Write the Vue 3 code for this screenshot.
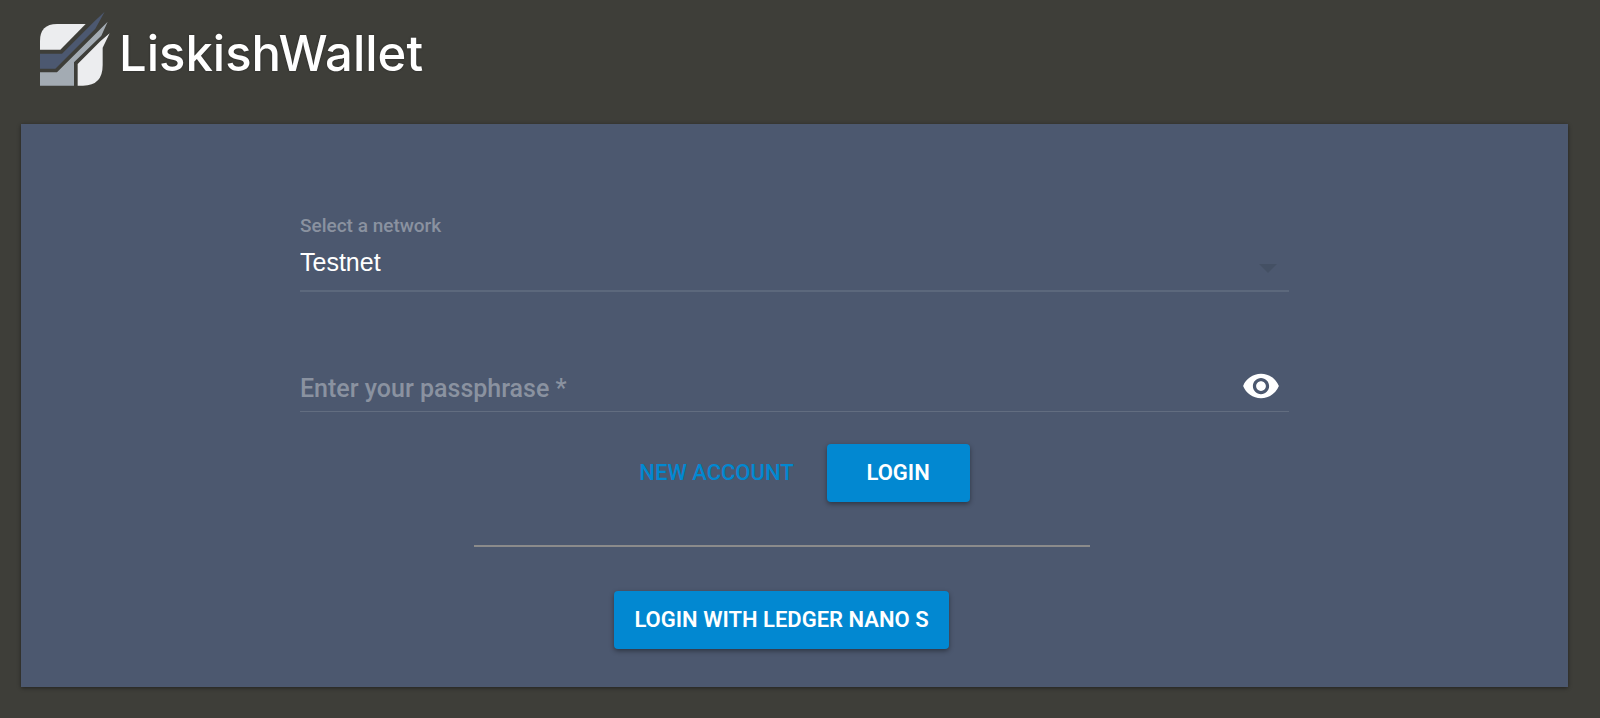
<script setup>
import { ref } from 'vue'

const network = ref('testnet')
const passphrase = ref('')
const visible = ref(false)
</script>

<template>
  <div class="page">
    <header class="brand">
      <svg class="logo" viewBox="57 27 216 234" aria-hidden="true">
        <path fill="#ecedef" d="M60 149V123Q60 72 111 72H197L121 149Z" />
        <path fill="#4c5870" d="M60 161H126L222 65L254 35L226 86L106 206H60Z" />
        <path fill="#a3abb3" d="M60 217H111L233 95L263 65L244 107L162 187V257H60Z" />
        <path fill="#ecedef" d="M173 257V192L241 124L269 100L248 143V195Q248 257 189 257Z" />
      </svg>
      <h1 class="name">LiskishWallet</h1>
    </header>

    <main class="card">
      <form class="form" @submit.prevent>
        <div class="field network">
          <label class="label" for="network">Select a network</label>
          <select id="network" v-model="network" class="select">
            <option value="testnet">Testnet</option>
            <option value="mainnet">Mainnet</option>
          </select>
          <svg class="arrow" viewBox="0 0 18 9" aria-hidden="true"><path d="M0 0H18L9 9Z" /></svg>
        </div>

        <div class="field phrase">
          <input
            v-model="passphrase"
            class="input"
            :type="visible ? 'text' : 'password'"
            placeholder="Enter your passphrase *"
            aria-label="Enter your passphrase"
            required
          />
          <button type="button" class="eye" aria-label="Show passphrase" @click="visible = !visible">
            <svg viewBox="1 4 22 16" aria-hidden="true">
              <path d="M12 4.5C7 4.5 2.73 7.61 1 12c1.73 4.39 6 7.5 11 7.5s9.27-3.11 11-7.5c-1.73-4.39-6-7.5-11-7.5zM12 17c-2.76 0-5-2.24-5-5s2.24-5 5-5 5 2.24 5 5-2.24 5-5 5zm0-8c-1.66 0-3 1.34-3 3s1.34 3 3 3 3-1.34 3-3-1.34-3-3-3z" />
            </svg>
          </button>
        </div>

        <div class="actions">
          <button type="button" class="btn flat">NEW ACCOUNT</button>
          <button type="submit" class="btn raised">LOGIN</button>
        </div>
      </form>

      <section class="ledger">
        <hr class="rule" />
        <button type="button" class="btn raised">LOGIN WITH LEDGER NANO S</button>
      </section>
    </main>
  </div>
</template>

<style>
body {
  margin: 0;
  background: #3e3e39;
}
</style>

<style scoped>
.page {
  box-sizing: border-box;
  min-height: 100vh;
  padding: 9px 32px 31px 21px;
  font-family: Roboto, "Liberation Sans", sans-serif;
  color: #fff;
}
.brand {
  display: flex;
  align-items: center;
  gap: 8px;
  height: 90px;
  padding: 0 18px;
  margin-bottom: 25px;
}
.logo {
  width: 72px;
  height: 78px;
  margin-bottom: 12px;
}
.name {
  margin: 0;
  font: 500 49px/56px Inter, sans-serif;
  text-shadow: 0 0 2px #222;
}
.card {
  padding: 80px 0 38px;
  background: #4c586f;
  box-shadow: 0 1px 4px rgba(0, 0, 0, 0.45);
}
.form {
  padding: 0 279px;
}
.field {
  position: relative;
  display: flex;
  border-bottom: 1px solid #626d80;
}
.network {
  flex-direction: column;
  height: 86px;
  border-bottom: 2px solid #5c687c;
}
.label {
  padding-top: 10px;
  font-size: 19px;
  font-weight: 500;
  line-height: 24px;
  color: #8a92a0;
}
.select {
  appearance: none;
  width: 100%;
  height: 48px;
  padding: 0;
  border: 0;
  outline: 0;
  background: transparent;
  font: 400 25px/30px "Liberation Sans", Arial, sans-serif;
  color: #fff;
}
.arrow {
  position: absolute;
  right: 12px;
  bottom: 17px;
  width: 18px;
  height: 9px;
  fill: #445064;
  pointer-events: none;
}
.phrase {
  align-items: center;
  height: 51px;
  margin-top: 68px;
}
.input {
  flex: 1;
  box-sizing: border-box;
  min-width: 0;
  height: 48px;
  padding: 5px 0 0;
  border: 0;
  outline: 0;
  background: transparent;
  font: 500 25px/30px Roboto, sans-serif;
  color: #fff;
}
.input::placeholder {
  color: #8a92a0;
  opacity: 1;
}
.eye {
  width: 56px;
  height: 48px;
  padding: 0 10px;
  border: 0;
  background: transparent;
  cursor: pointer;
}
.eye svg {
  display: block;
  width: 36px;
  height: 26px;
  fill: #fff;
}
.actions {
  display: flex;
  justify-content: center;
  gap: 13px;
  margin-top: 32px;
}
.btn {
  height: 58px;
  padding: 0 20px;
  border: 0;
  border-radius: 4px;
  font: 600 22px/58px Roboto, sans-serif;
  color: #fff;
  white-space: nowrap;
  cursor: pointer;
}
.flat {
  font-weight: 500;
  color: #0288d1;
  background: transparent;
}
.raised {
  min-width: 143px;
  background: #0288d1;
  box-shadow: 0 2px 5px rgba(0, 0, 0, 0.4);
}
.ledger {
  display: flex;
  flex-direction: column;
  align-items: center;
  padding-right: 26px;
}
.rule {
  box-sizing: border-box;
  width: 616px;
  height: 2px;
  margin: 43px 0 44px;
  border: 0;
  background: #8b8b8b;
}
</style>
